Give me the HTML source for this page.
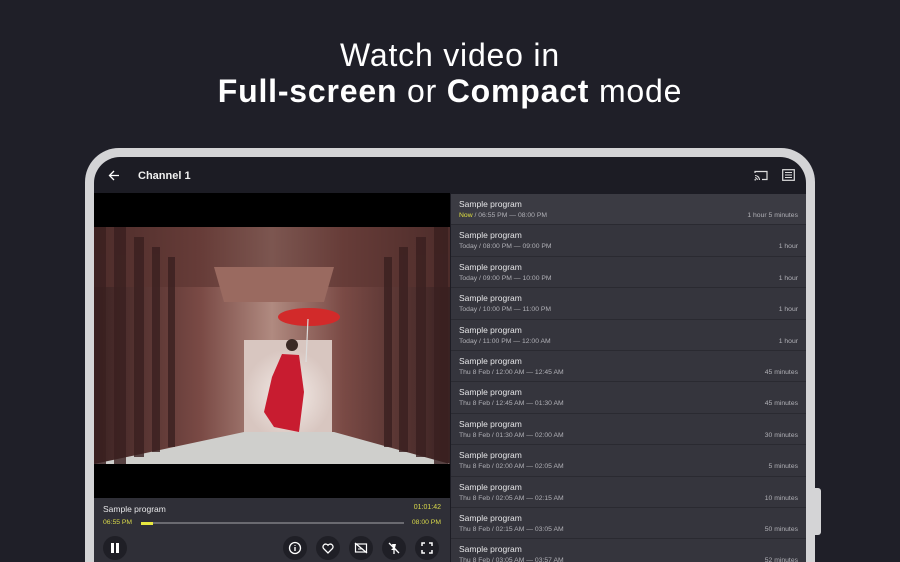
<!DOCTYPE html>
<html><head><meta charset="utf-8">
<style>
*{margin:0;padding:0;box-sizing:border-box}
html{width:900px;height:562px;overflow:hidden}
body{width:900px;height:562px;overflow:hidden;background:#1f1f28;font-family:"Liberation Sans",sans-serif;position:relative;color:#fff}
.h{position:absolute;left:0;width:900px;text-align:center;font-size:32px;color:#fff;letter-spacing:0.8px}
.frame{position:absolute;left:85px;top:148px;width:730px;height:414px;border-radius:34px 34px 0 0;background:#d4d4d6}
.btn{position:absolute;left:812px;top:488px;width:9px;height:47px;border-radius:3px;background:#d4d4d6}
.screen{position:absolute;left:94px;top:157px;width:712px;height:405px;border-radius:26px 26px 0 0;background:#1c1c24;overflow:hidden}
.tb{position:absolute;left:0;top:0;width:712px;height:36px}
.video{position:absolute;left:0;top:36px;width:356px;height:305px;background:#000}
.ctrl{position:absolute;left:0;top:341px;width:356px;height:80px;background:#2f2f37}
.list{position:absolute;left:357px;top:37px;width:355px}
.row{height:31.4px;background:#35353d;border-bottom:1px solid #2a2a31;position:relative}
.row.a{background:#3b3b43}
.t{position:absolute;left:8px;top:5px;font-size:8.5px;color:#e6e6e8}
.s{position:absolute;left:8px;top:18px;font-size:6.8px;color:#b0b0b6}
.d{position:absolute;right:8px;top:18px;font-size:6.8px;color:#b0b0b6}
.cb{position:absolute;top:38px;width:24px;height:24px;border-radius:50%;background:#1f1f26}
</style></head><body>
<div class="h" style="top:37px">Watch video in</div>
<div class="h" style="top:73px"><b>Full-screen</b> or <b>Compact</b> mode</div>
<div class="frame"></div><div class="btn"></div>
<div class="screen">
 <div class="tb">
  <svg style="position:absolute;left:14px;top:13px" width="12" height="11" viewBox="0 0 12 11"><path d="M11 5.5H1.5M6 1L1.5 5.5 6 10" stroke="#fff" stroke-width="1.3" fill="none"/></svg>
  <div style="position:absolute;left:44px;top:13px;font-size:11px;font-weight:bold;color:#f0f0f0">Channel 1</div>
  <svg style="position:absolute;left:660px;top:13px" width="14" height="11" viewBox="0 0 14 11"><path d="M1 3V1.5h12v8H8" stroke="#ddd" stroke-width="1.2" fill="none"/><path d="M1 5.5a4.5 4.5 0 0 1 4.5 4.5M1 7.7a2.3 2.3 0 0 1 2.3 2.3" stroke="#ddd" stroke-width="1.1" fill="none"/><circle cx="1.2" cy="9.8" r="0.8" fill="#ddd"/></svg>
  <svg style="position:absolute;left:688px;top:12px" width="13" height="12" viewBox="0 0 13 12"><rect x="0.7" y="0.7" width="11.6" height="10.6" stroke="#ddd" stroke-width="1.2" fill="none"/><path d="M3 3.5h7M3 6h7M3 8.5h7" stroke="#ddd" stroke-width="1.1"/></svg>
 </div>
 <div class="video">
  <svg style="position:absolute;left:0;top:34px" width="356" height="237" viewBox="0 0 356 237">
   <defs>
    <linearGradient id="g" x1="0" x2="1"><stop offset="0" stop-color="#3a2222"/><stop offset="0.3" stop-color="#7a4a45"/><stop offset="0.5" stop-color="#b08a80"/><stop offset="0.7" stop-color="#7a4a45"/><stop offset="1" stop-color="#3a2222"/></linearGradient>
    <radialGradient id="r" cx="0.5" cy="0.6" r="0.5"><stop offset="0" stop-color="#f4ece8"/><stop offset="1" stop-color="#d8c6c0"/></radialGradient>
   </defs>
   <rect width="356" height="237" fill="url(#g)"/>
   <rect x="0" y="0" width="356" height="60" fill="#5a3430" opacity="0.6"/>
   <polygon points="120,40 240,40 230,75 130,75" fill="#9a6a60"/>
   <rect x="150" y="113" width="88" height="92" fill="url(#r)"/>
   <polygon points="0,237 356,237 240,205 150,205" fill="#cfcfcc"/>
   <g fill="#3a2020" opacity="0.8"><rect x="0" y="0" width="12" height="237"/><rect x="20" y="0" width="12" height="237"/><rect x="40" y="10" width="10" height="220"/><rect x="58" y="20" width="8" height="205"/><rect x="74" y="30" width="7" height="190"/><rect x="290" y="30" width="8" height="190"/><rect x="305" y="20" width="9" height="205"/><rect x="322" y="10" width="10" height="220"/><rect x="340" y="0" width="14" height="237"/></g>
   <ellipse cx="215" cy="90" rx="31" ry="9" fill="#d22a2a"/>
   <line x1="214" y1="92" x2="212" y2="135" stroke="#ddd" stroke-width="1.2"/>
   <circle cx="198" cy="118" r="6" fill="#3a2a25"/>
   <path d="M188 127 L205 128 L210 165 L205 205 L180 200 L170 185 L178 150 Z" fill="#c81c30"/>
  </svg>
 </div>
 <div class="ctrl">
  <div style="position:absolute;left:9px;top:6px;font-size:8.5px;color:#e6e6e8">Sample program</div>
  <div style="position:absolute;right:9px;top:6px;font-size:7px;color:#d8d84a">01:01:42</div>
  <div style="position:absolute;left:9px;top:21px;font-size:6.8px;color:#d8d84a">06:55 PM</div>
  <div style="position:absolute;right:9px;top:21px;font-size:6.8px;color:#d8d84a">08:00 PM</div>
  <div style="position:absolute;left:47px;top:24px;width:263px;height:2px;background:#6a6a70"></div>
  <div style="position:absolute;left:47px;top:23.5px;width:12px;height:3px;background:#e8e840"></div>
  <div class="cb" style="left:9px"><div style="position:absolute;left:8px;top:7px;width:3px;height:10px;background:#fff"></div><div style="position:absolute;left:13px;top:7px;width:3px;height:10px;background:#fff"></div></div>
  <div class="cb" style="left:189px"><svg width="24" height="24"><circle cx="12" cy="12" r="5.5" stroke="#fff" stroke-width="1.3" fill="none"/><path d="M12 11v4M12 9v0.8" stroke="#fff" stroke-width="1.4"/></svg></div>
  <div class="cb" style="left:222px"><svg width="24" height="24"><path d="M12 17l-4.5-4.5a2.6 2.6 0 0 1 4.5-3.3 2.6 2.6 0 0 1 4.5 3.3z" stroke="#fff" stroke-width="1.3" fill="none"/></svg></div>
  <div class="cb" style="left:255px"><svg width="24" height="24"><rect x="6.5" y="8" width="11" height="8" stroke="#fff" stroke-width="1.2" fill="none"/><path d="M9 13h5" stroke="#fff"/><path d="M6 7l12 10" stroke="#fff" stroke-width="1.3"/></svg></div>
  <div class="cb" style="left:288px"><svg width="24" height="24"><path d="M10 8h4l-1 4 2 2h-6l2-2z" fill="#fff"/><path d="M12 14v4M7 7l10 10" stroke="#fff" stroke-width="1.3"/></svg></div>
  <div class="cb" style="left:321px"><svg width="24" height="24"><path d="M7 10V7h3M14 7h3v3M17 14v3h-3M10 17H7v-3" stroke="#fff" stroke-width="1.5" fill="none"/></svg></div>
 </div>
 <div class="list">
  <div class="row a"><div class="t">Sample program</div><div class="s"><span style="color:#e0e040">Now</span> / 06:55 PM — 08:00 PM</div><div class="d">1 hour 5 minutes</div></div>
  <div class="row"><div class="t">Sample program</div><div class="s">Today / 08:00 PM — 09:00 PM</div><div class="d">1 hour</div></div>
  <div class="row"><div class="t">Sample program</div><div class="s">Today / 09:00 PM — 10:00 PM</div><div class="d">1 hour</div></div>
  <div class="row"><div class="t">Sample program</div><div class="s">Today / 10:00 PM — 11:00 PM</div><div class="d">1 hour</div></div>
  <div class="row"><div class="t">Sample program</div><div class="s">Today / 11:00 PM — 12:00 AM</div><div class="d">1 hour</div></div>
  <div class="row"><div class="t">Sample program</div><div class="s">Thu 8 Feb / 12:00 AM — 12:45 AM</div><div class="d">45 minutes</div></div>
  <div class="row"><div class="t">Sample program</div><div class="s">Thu 8 Feb / 12:45 AM — 01:30 AM</div><div class="d">45 minutes</div></div>
  <div class="row"><div class="t">Sample program</div><div class="s">Thu 8 Feb / 01:30 AM — 02:00 AM</div><div class="d">30 minutes</div></div>
  <div class="row"><div class="t">Sample program</div><div class="s">Thu 8 Feb / 02:00 AM — 02:05 AM</div><div class="d">5 minutes</div></div>
  <div class="row"><div class="t">Sample program</div><div class="s">Thu 8 Feb / 02:05 AM — 02:15 AM</div><div class="d">10 minutes</div></div>
  <div class="row"><div class="t">Sample program</div><div class="s">Thu 8 Feb / 02:15 AM — 03:05 AM</div><div class="d">50 minutes</div></div>
  <div class="row"><div class="t">Sample program</div><div class="s">Thu 8 Feb / 03:05 AM — 03:57 AM</div><div class="d">52 minutes</div></div>
 </div>
</div>
</body></html>
